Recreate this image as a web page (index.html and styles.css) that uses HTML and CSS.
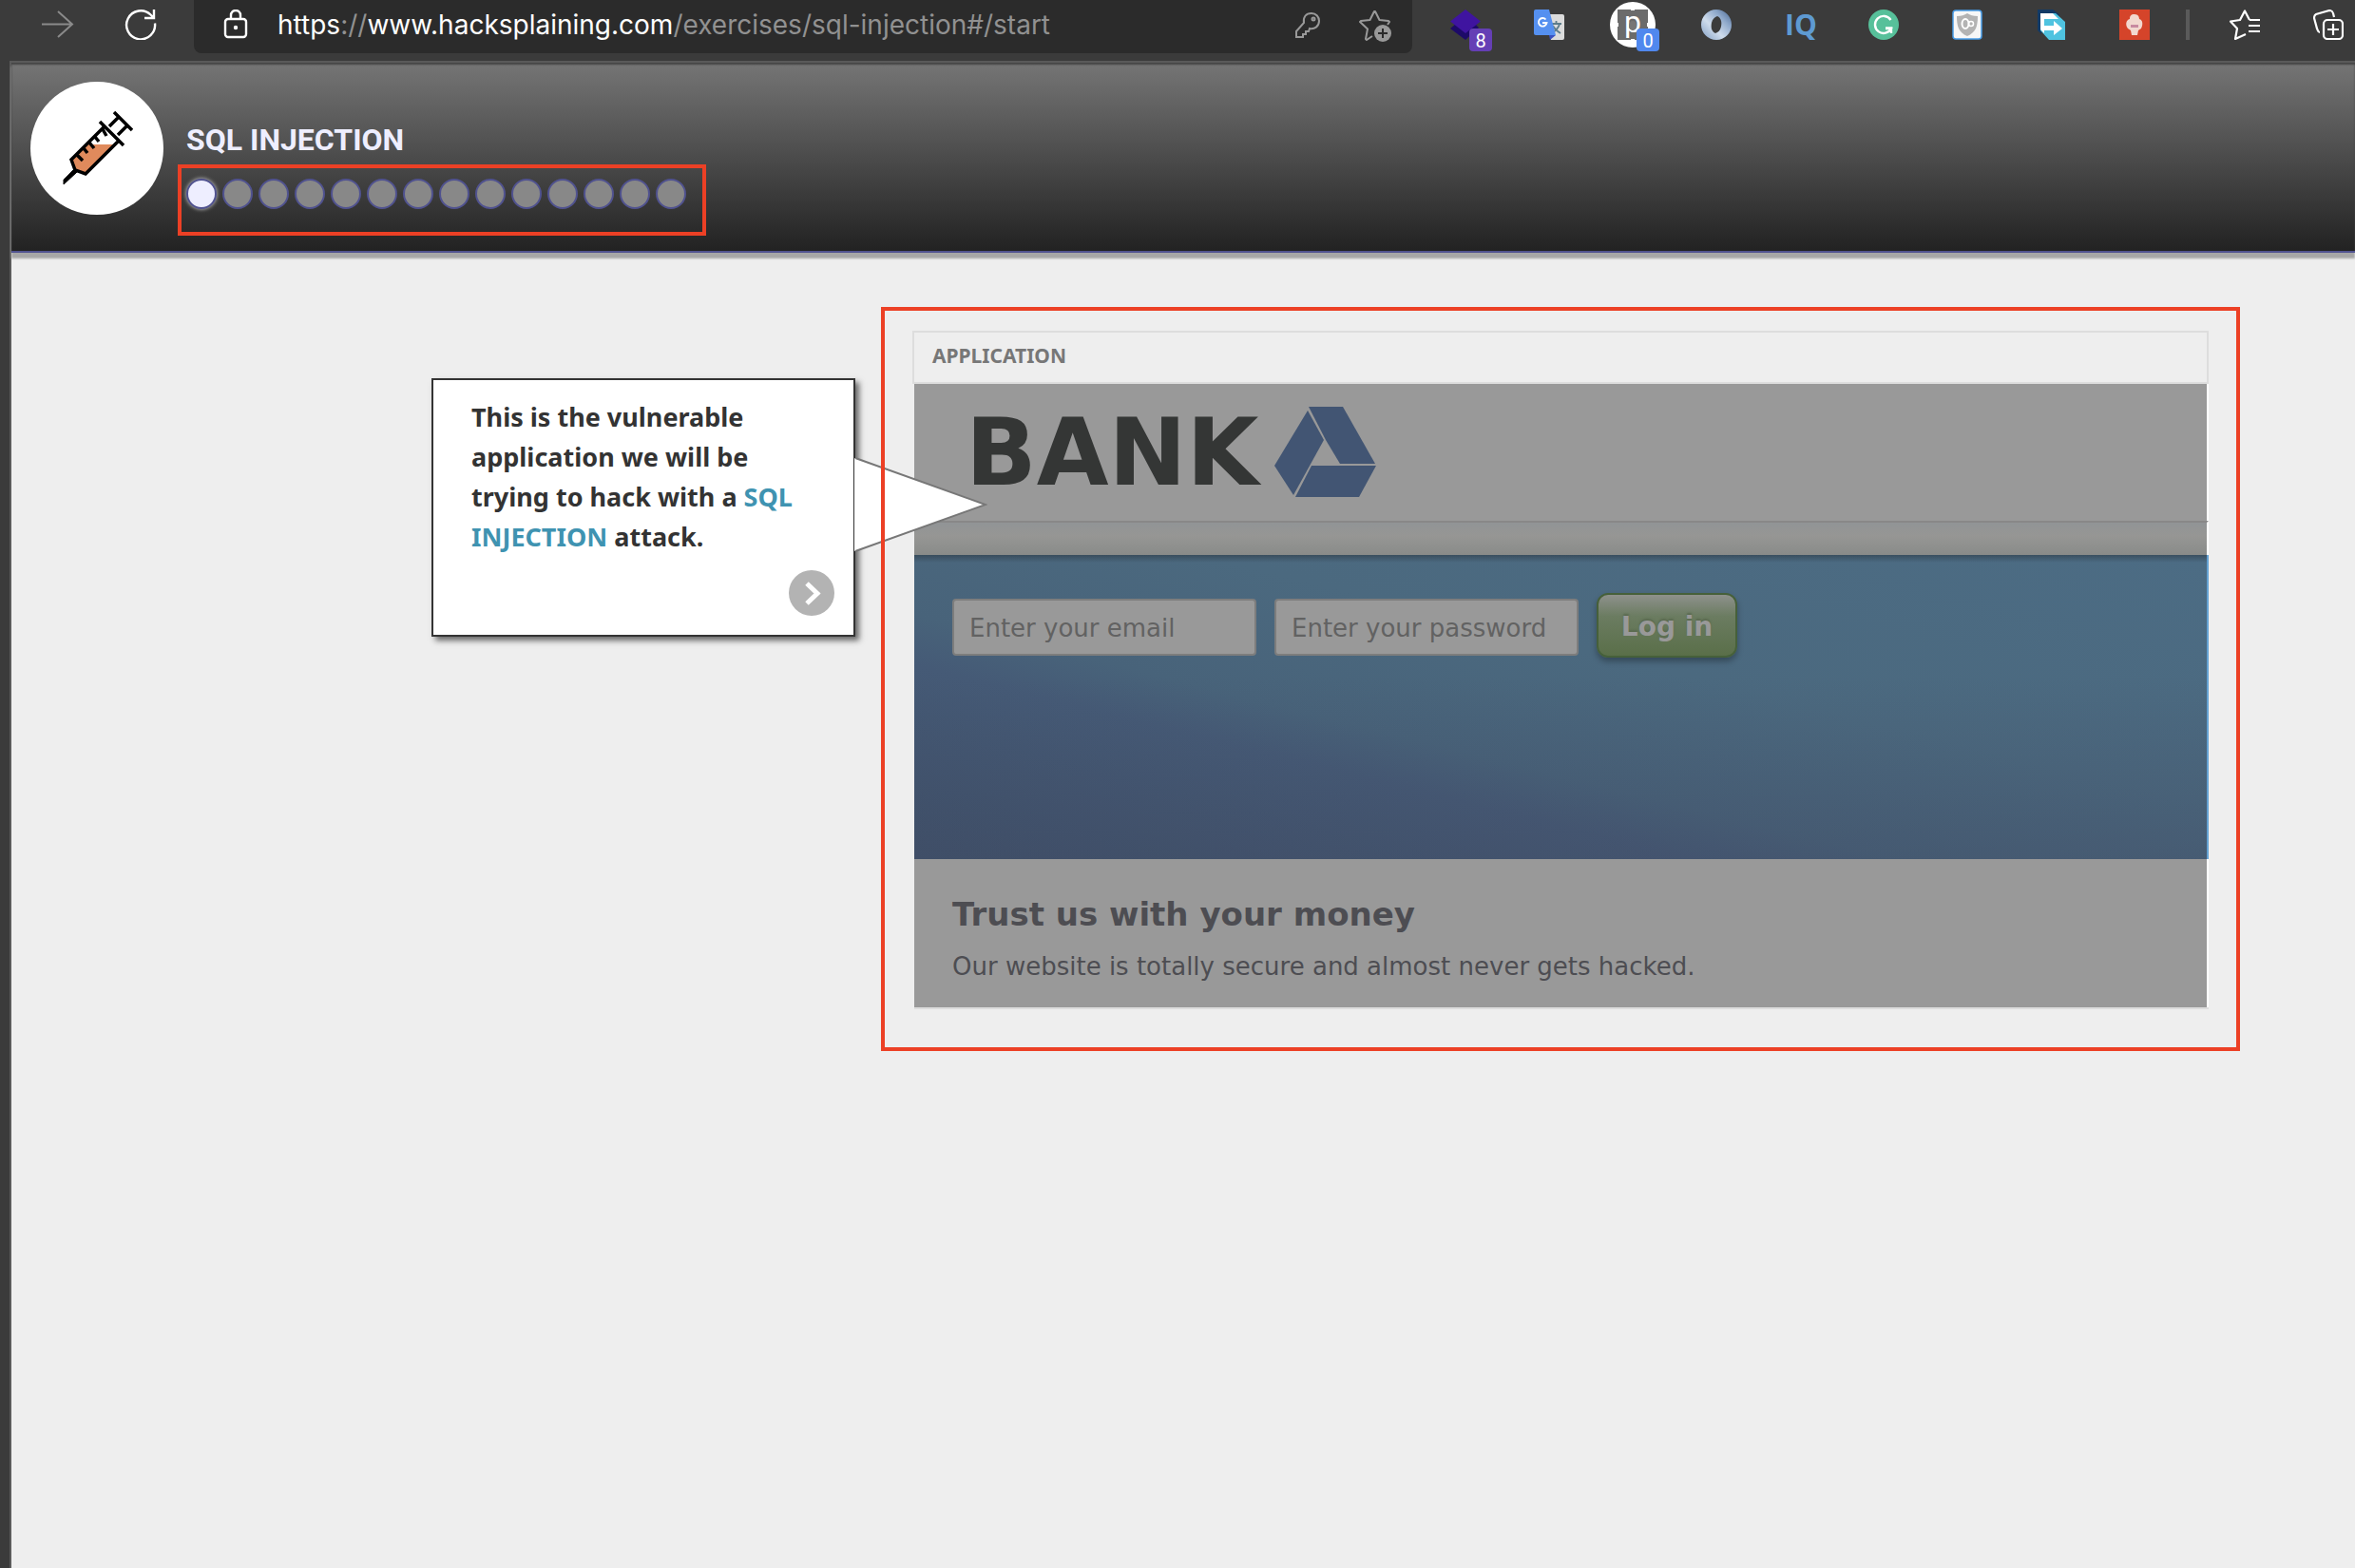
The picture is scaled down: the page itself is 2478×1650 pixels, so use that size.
FILE: index.html
```html
<!DOCTYPE html>
<html lang="en">
<head>
<meta charset="utf-8">
<title>SQL Injection</title>
<link rel="stylesheet" href="styles.css">
</head>
<body>
<div class="toolbar">
  <button class="tool forward" aria-label="Forward"><svg width="34" height="32" viewBox="0 0 34 32" fill="none" stroke="#8a8a8a" stroke-width="2"><path d="M0 15.500h32M17 2l15 13.500L17 29"/></svg></button>
  <button class="tool reload" aria-label="Reload"><svg width="34" height="32" viewBox="0 0 34 32" fill="none" stroke="#fff" stroke-width="2.400"><path d="M32 14.500A15 15 0 1 1 27.500 5.500L31 9M31 0v9h-10"/></svg></button>
  <div class="address">
    <svg width="26" height="32" viewBox="0 0 26 32" fill="none" stroke="#fff" stroke-width="2.400"><rect x="2" y="10" width="22" height="19" rx="3"/><path d="M8 10V6a5 5 0 0 1 10 0v4"/><circle cx="13" cy="19" r="1" fill="#fff"/></svg>
    <div class="url"><b>https</b>://<b>www.hacksplaining.com</b>/exercises/sql-injection#/start</div>
    <button class="tool key" aria-label="Passwords"><svg width="28" height="32" viewBox="0 0 28 32" fill="none" stroke="#999" stroke-width="2"><path d="M10 14C9 8 12 4 18 4c5 0 8 4 8 8 0 6-5 9-10 8l-1 3h-3v3H9v3H2v-6z"/><circle cx="20" cy="10" r="1.500"/></svg></button>
    <button class="tool" aria-label="Add to favorites"><svg width="34" height="34" viewBox="0 0 34 34" fill="none" stroke="#999" stroke-width="2" stroke-linejoin="round"><path d="M14 28l-6 4-1-1 2-10.500-8-7.500 1-1 9.500-1L16 2h1l4.500 9 9.500 1 1 1-2 3"/><circle cx="25" cy="25" r="9" fill="#999" stroke="none"/><path d="M25 20v10M20 25h10" stroke="#2b2b2b"/></svg></button>
  </div>
  <div class="extensions">
    <button class="tool" aria-label="Layers, 8"><svg width="32" height="32" viewBox="0 0 32 32"><path d="M0 20l6-5h20l4 4-14 13z" fill="#1d0a68"/><path d="M16 0l16 12.500L16 25 0 12.500z" fill="#3f14a0"/></svg><span class="badge purple">8</span></button>
    <button class="tool" aria-label="Translate"><svg width="32" height="32" viewBox="0 0 32 32"><path d="M12 5h18a2 2 0 0 1 2 2v23a2 2 0 0 1-2 2H18z" fill="#dcdcdc"/><path d="M18 15h11M23.500 12v3M27 15c-1 5-4 7-7 9M20 17c2 4 5 6 8 8" stroke="#5d7d8b" stroke-width="1.800" fill="none"/><path d="M16 27h7l-6 5z" fill="#3a52c0"/><path d="M2 0h14l7 27H2a2 2 0 0 1-2-2V2a2 2 0 0 1 2-2z" fill="#5590f0"/><path d="M12.500 10.500A4.300 4.300 0 1 0 13.500 14H9" stroke="#fff" stroke-width="1.900" fill="none"/></svg></button>
    <button class="tool" aria-label="Page helper, 0"><svg class="round" width="48" height="48" viewBox="0 0 48 48"><circle cx="24" cy="24" r="24" fill="#fff"/><path d="M8 8h32v32H8z" fill="#6b6b6b"/><text x="24" y="32" text-anchor="middle" class="letter">p</text><ellipse cx="24" cy="25" rx="4" ry="5" fill="#777"/><path d="M22 8h4M22 40h4M8 22v4M40 22v4" stroke="#fff" stroke-width="2"/></svg><span class="badge blue">0</span></button>
    <button class="tool" aria-label="Ring"><svg width="32" height="32" viewBox="0 0 32 32"><defs><linearGradient id="ring" x1="1" y1="0" x2="0" y2="1"><stop offset="0" stop-color="#47648f"/><stop offset=".3" stop-color="#8fa9cb"/><stop offset=".6" stop-color="#cfdcec"/><stop offset="1" stop-color="#7f9cc3"/></linearGradient></defs><path fill-rule="evenodd" fill="url(#ring)" d="M16 0a16 16 0 1 0 0 32 16 16 0 0 0 0-32zM17 7c4 2 5 6 4 11-1 4-3 6-6 7-4-2-5-6-4-11 1-4 3-6 6-7z"/></svg></button>
    <button class="tool" aria-label="IQ"><span class="iq">IQ</span></button>
    <button class="tool" aria-label="Grammar"><svg width="32" height="32" viewBox="0 0 32 32"><circle cx="16" cy="16" r="16" fill="#57c09a"/><path d="M23.500 11A9 9 0 1 0 24 20H18M24 25v-5.500h-6" fill="none" stroke="#fff" stroke-width="2.400"/></svg></button>
    <button class="tool" aria-label="Shield"><svg width="32" height="32" viewBox="0 0 32 32"><rect x="1" y="1" width="30" height="30" rx="3" fill="#f7f7f7" stroke="#4a9de8" stroke-width="1.500"/><path d="M16 4c3 2 6 3 11 3 0 11-2 17-11 21C7 24 5 18 5 7c5 0 8-1 11-3z" fill="#b3b3b3"/><ellipse cx="14" cy="15" rx="3.500" ry="5" fill="none" stroke="#fff" stroke-width="2"/><circle cx="20" cy="15" r="2.500" fill="none" stroke="#fff" stroke-width="1.500"/></svg></button>
    <button class="tool" aria-label="Send"><svg width="32" height="32" viewBox="0 0 32 32"><path d="M2 0h16l8 6H6v20L2 22z" fill="#123a66"/><path d="M5 4h16l10 9v19H14L5 22z" fill="#4fc3e0"/><path d="M5 4h13l6 6H9v15L5 21z" fill="#fff"/><path d="M9 17h10v-5l9 8-9 7v-5H9z" fill="#fff"/></svg></button>
    <button class="tool" aria-label="Character"><svg width="32" height="32" viewBox="0 0 32 32"><path d="M0 0h32v32H0z" fill="#d5442a"/><path d="M16 5c4 0 5 3 5 5 4 1 4 6 2 10l-3 2-1 5h-6l-1-5-3-2c-3-4-2-9 2-10 0-3 1-5 5-5z" fill="#f2d8cf"/><path d="M12 16h8v3h-8z" fill="#c88aa0"/></svg></button>
  </div>
  <span class="divider"></span>
  <div class="extensions">
    <button class="tool" aria-label="Favorites"><svg width="32" height="32" viewBox="0 0 32 32" fill="none" stroke="#fff" stroke-width="2.200" stroke-linejoin="round"><path d="M21 11l-5-9.500L11 11 1 12.500 8 20 6 31l11-5M21 11h11M20 17h12M20 23h12"/></svg></button>
    <button class="tool" aria-label="Collections"><svg width="32" height="32" viewBox="0 0 32 32" fill="none" stroke="#fff" stroke-width="2.200"><rect x="11" y="11" width="20" height="20" rx="4"/><path d="M21 15v12M15 21h12M7 24c-2 0-2-2-3-4L1 9c0-2 0-3 2-4l14-4c2 0 3 0 4 3l1 4"/></svg></button>
  </div>
</div>
<div class="page">
  <header class="header">
    <div class="logo"><svg width="76" height="80" viewBox="0 0 76 80" fill="none" stroke="#000" stroke-width="3.500"><path d="M29 36h28L26 67 15 63 11 52z" fill="#e08a5c" stroke="none"/><path d="M46 17L11 52l4 11 11 4 34-34M41 12l25 25M56 2l19 19M51 17l10-10M60 26l10-10M44 20l4 7M36 28l4 5M30 34l5 6M24 40l4 5M17 47l6 6"/><path d="M14 62L3 73v5l14-13z" fill="#000" stroke-width="1"/></svg></div>
    <div class="lesson">
      <h1>SQL INJECTION</h1>
      <nav class="steps" aria-label="Steps">
        <button class="step current" aria-label="1"></button><button class="step" aria-label="2"></button><button class="step" aria-label="3"></button><button class="step" aria-label="4"></button><button class="step" aria-label="5"></button><button class="step" aria-label="6"></button><button class="step" aria-label="7"></button><button class="step" aria-label="8"></button><button class="step" aria-label="9"></button><button class="step" aria-label="10"></button><button class="step" aria-label="11"></button><button class="step" aria-label="12"></button><button class="step" aria-label="13"></button><button class="step" aria-label="14"></button>
      </nav>
    </div>
  </header>
  <main class="stage">
    <aside class="callout">
      <p>This is the vulnerable application we will be trying to hack with a <a href="#sql">SQL INJECTION</a> attack.</p>
      <button class="next" aria-label="Next"><svg width="48" height="48" viewBox="0 0 48 48"><circle cx="24" cy="24" r="24" fill="#b3b3b3"/><path d="M19 14l11 10.500L19 35" fill="none" stroke="#fff" stroke-width="5"/></svg></button>
      <svg class="pointer" width="140" height="100" viewBox="0 0 140 100"><path d="M0 1L138 50 0 99z" fill="#fff"/><path d="M1 1L138 50 1 99" fill="none" stroke="#777" stroke-width="2"/></svg>
    </aside>
    <section class="frame">
      <div class="app">
        <h2 class="app-title">APPLICATION</h2>
        <div class="bank">
          <div class="brand"><span>BANK</span><svg width="108" height="96" viewBox="0 0 108 96" fill="#425573"><path d="M36 0h36l34 60H69L54 35z"/><path d="M35 4l17 31-32 58L0 62z"/><path d="M39 62h68L89 95H22z"/></svg></div>
          <div class="strip"></div>
          <form class="login">
            <input type="email" placeholder="Enter your email" aria-label="Email">
            <input type="password" placeholder="Enter your password" aria-label="Password">
            <button type="button">Log in</button>
          </form>
          <div class="pitch">
            <h3>Trust us with your money</h3>
            <p>Our website is totally secure and almost never gets hacked.</p>
          </div>
        </div>
      </div>
    </section>
  </main>
</div>
</body>
</html>
```
FILE: styles.css
```css
* { box-sizing: border-box; }
body { margin: 0; min-height: 100vh; display: flex; flex-direction: column; background: #3b3b3b; font-family: "Noto Sans", sans-serif; overflow-x: hidden; }
h1, h2, h3, p { margin: 0; }
button { padding: 0; border: 0; background: none; font: inherit; }
svg { display: block; flex: none; }

.toolbar { display: flex; align-items: flex-start; height: 64px; padding: 0 12px 0 44px; }
.tool { position: relative; display: block; flex: none; height: 32px; margin-top: 10px; }
.reload { margin-left: 53px; }
.address { flex: 1; display: flex; align-items: center; height: 56px; margin: 0 40px 0 39px; padding: 0 22px 4px 31px; background: #2b2b2b; border-radius: 0 0 8px 8px; }
.address .tool { margin-top: 0; }
.url { flex: 1; margin-left: 31px; font: 28px/32px Inter, sans-serif; color: #919191; white-space: nowrap; }
.url b { font-weight: 400; color: #fff; }
.key { margin-right: 40px; }
.extensions { display: flex; gap: 56px; }
.extensions .tool { width: 32px; }
.round { margin: -8px; }
.letter { font: 32px Roboto, sans-serif; fill: #fff; }
.badge { position: absolute; left: 20px; top: 20px; width: 24px; height: 24px; border-radius: 4px; font: 20px/26px Roboto, sans-serif; color: #fff; text-align: center; }
.purple { background: #653fb5; }
.blue { background: #5088ee; }
.iq { font: 700 30px/32px "Open Sans", sans-serif; color: #5e9ad2; }
.divider { width: 4px; height: 32px; margin: 10px 42px 0 38px; background: #5a5a5a; }

.page { flex: 1; margin-left: 10px; border-left: 2px solid #5a5a5a; background: #eee; }
.header { display: flex; gap: 15px; padding: 20px 20px 16px; border-top: 2px solid #5a5a5a; border-bottom: 2px solid #50528f; background: linear-gradient(#757575, #222); box-shadow: inset 0 2px 2px #444, 0 6px 2px #a6a6a6; }
.logo { flex: none; display: flex; align-items: center; justify-content: center; width: 140px; height: 140px; border-radius: 50%; background: #fff; }
.lesson { padding-top: 35px; }
.lesson h1 { padding-left: 9px; font: 700 32px/52px Roboto, sans-serif; color: #eeeeff; }
.steps { display: flex; gap: 6px; padding: 11px 17px 24px 5px; border: 4px solid #ec4025; }
.step { width: 32px; height: 32px; border: 2px solid #50528f; border-radius: 50%; background: #888; }
.current { background: #eeeeff; box-shadow: 0 0 4px #ccc; }

.stage { display: flex; align-items: flex-start; gap: 27px; padding: 57px 121px 57px 442px; }
.callout { position: relative; z-index: 1; flex: none; width: 446px; margin-top: 75px; padding: 18px 20px 20px 40px; border: 2px solid #333; background: #fff; box-shadow: 4px 4px 6px #666; }
.callout p { padding-right: 20px; font-size: 27px; line-height: 42px; font-weight: 700; color: #333; }
.callout a { color: #3f93b1; text-decoration: none; }
.next { display: block; margin: 14px 0 0 auto; }
.pointer { position: absolute; left: 443px; top: 81px; }
.frame { position: relative; flex: 1; padding: 25px 33px 44px; }
.frame::after { content: ""; position: absolute; inset: 0; z-index: 2; border: 4px solid #ec4025; pointer-events: none; }
.app-title { height: 56px; padding-left: 19px; border: 2px solid #ddd; font-size: 21px; line-height: 48px; color: #777; }
.bank { margin-left: 2px; border-bottom: 2px solid #ddd; background: #999; font-family: "DejaVu Sans", Verdana, sans-serif; color: #4d4d52; }
.bank > * { border-right: 2px solid #fff; }
.brand { display: flex; align-items: center; gap: 16px; height: 144px; padding-left: 54px; color: #343635; font-size: 98px; font-weight: 700; }
.strip { height: 36px; border-top: 2px solid #888; background: linear-gradient(#919496, #969694 40%, #898b89); }
.bank .login { display: flex; align-items: flex-start; gap: 19px; height: 320px; padding: 40px; border-right-color: #65a2d3; background: linear-gradient(rgba(40, 50, 60, .5), rgba(40, 50, 60, 0) 8px), linear-gradient(rgba(65, 75, 100, 0) 40%, rgba(65, 75, 100, .4)), linear-gradient(14deg, #3e5069, #455a76 31%, #48637a 39%, #4b697f 60%, #4c6c84); }
.login input { width: 320px; height: 60px; margin-top: 6px; padding: 2px 16px 0; border: 2px solid #7d7d7d; border-radius: 4px; background: #999; font: 26px "DejaVu Sans", sans-serif; }
.login input::placeholder { color: #626262; opacity: 1; }
.login button { width: 148px; height: 68px; padding-top: 2px; border: 2px solid #46603a; border-radius: 12px; background: linear-gradient(#8e918c, #6b7c61 35%, #5a6f49); box-shadow: 0 4px 6px rgba(0, 0, 0, .3); font-size: 28px; font-weight: 700; color: #999; text-shadow: 0 -2px 2px #5a6a50; }
.pitch { padding: 34px 40px 22px; }
.pitch h3 { font-size: 34px; line-height: 48px; }
.pitch p { margin-top: 10px; font-size: 26px; line-height: 42px; }
```
